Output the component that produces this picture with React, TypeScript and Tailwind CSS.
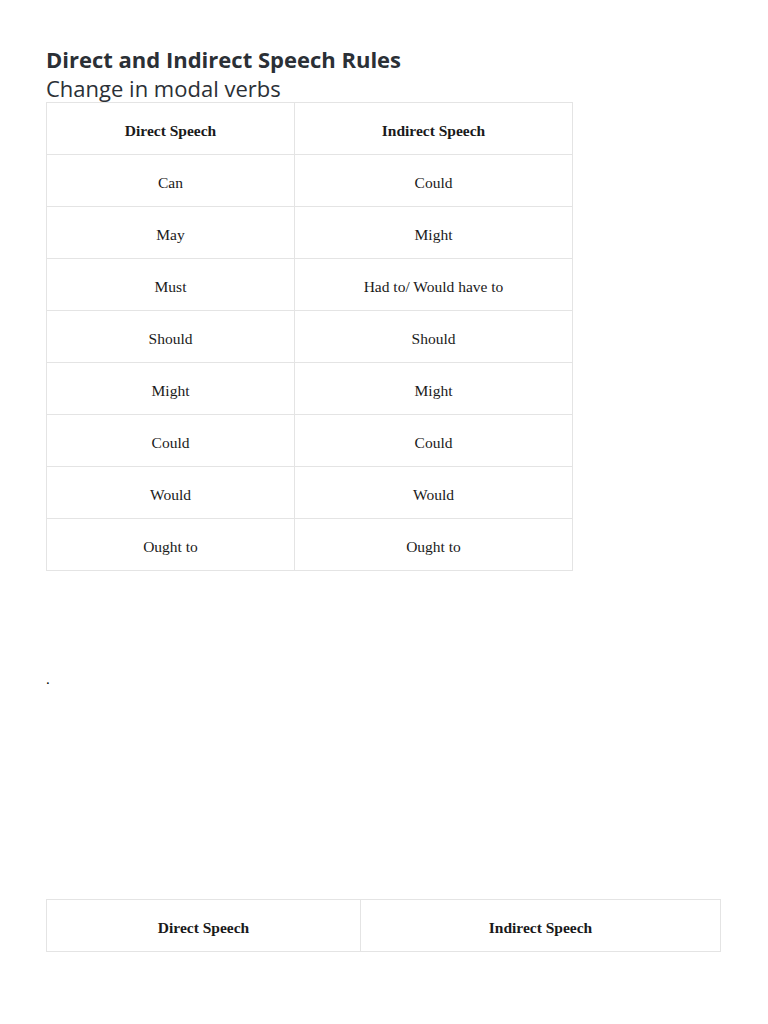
import React from 'react';

const rows = [
    ['Can', 'Could'],
    ['May', 'Might'],
    ['Must', 'Had to/ Would have to'],
    ['Should', 'Should'],
    ['Might', 'Might'],
    ['Could', 'Could'],
    ['Would', 'Would'],
    ['Ought to', 'Ought to'],
];

const cell = 'h-[52px] border border-[#e4e4e4] pt-[4px] text-center align-middle text-[15.5px] text-[#1a1a1a]';

const App = () => {
    return (
        <div className="min-h-[1024px] bg-white pl-[46px] pt-[45px]">
            <h1 className="text-[22px] font-bold leading-[29px] text-[#2b3036]" style={{ fontFamily: '"Open Sans", sans-serif' }}>
                Direct and Indirect Speech Rules
            </h1>
            <h2 className="text-[22px] leading-[28px] text-[#2b3036]" style={{ fontFamily: '"Open Sans", sans-serif' }}>
                Change in modal verbs
            </h2>

            <table className="w-[527px] border-collapse" style={{ fontFamily: '"Liberation Serif", serif' }}>
                <tbody>
                    <tr>
                        <td className={`${cell} w-[248px] font-bold`}>Direct Speech</td>
                        <td className={`${cell} font-bold`}>Indirect Speech</td>
                    </tr>
                    {rows.map(([a, b]) => (
                        <tr key={a}>
                            <td className={cell}>{a}</td>
                            <td className={cell}>{b}</td>
                        </tr>
                    ))}
                </tbody>
            </table>

            <p className="mt-[98px] text-[15px] leading-[20px] text-black" style={{ fontFamily: '"Liberation Serif", serif' }}>.</p>

            <table className="mt-[210px] w-[675px] border-collapse" style={{ fontFamily: '"Liberation Serif", serif' }}>
                <tbody>
                    <tr>
                        <td className={`${cell} w-[314px] font-bold`}>Direct Speech</td>
                        <td className={`${cell} font-bold`}>Indirect Speech</td>
                    </tr>
                </tbody>
            </table>
        </div>
    );
};

export default App;
